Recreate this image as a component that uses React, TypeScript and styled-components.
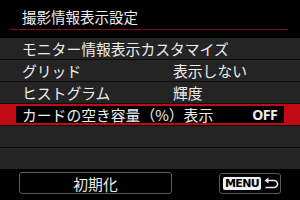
import React from "react";
import styled, { createGlobalStyle } from "styled-components";

const Global = createGlobalStyle`
  html, body { margin: 0; padding: 0; background: #000; }
  body { width: 300px; height: 200px; overflow: hidden; font-family: "Noto Sans CJK JP", "Noto Sans", sans-serif; color: #ececec; }
`;

const Screen = styled.div`
  width: 300px;
  height: 200px;
  background: #000;
  display: flex;
  flex-direction: column;
`;

const Header = styled.div`
  height: 30px;
  padding: 0 12px 0 10px;
  display: flex;
  flex-direction: column;
  justify-content: flex-end;
`;

const Title = styled.div`
  font-size: 14.5px;
  line-height: 16px;
  padding: 0 0 4px 12px;
  color: #ededed;
`;

const RedRule = styled.div`
  height: 1px;
  background: #8a0a10;
`;

const List = styled.div`
  margin-top: 8px;
  display: flex;
  flex-direction: column;
  gap: 1px;
  background: #0c0c0c;
`;

const Row = styled.div<{ $selected?: boolean }>`
  height: 21px;
  box-sizing: border-box;
  background: ${(p) => (p.$selected ? "#c20a14" : "#242424")};
  padding: ${(p) => (p.$selected ? "2px 16px" : "0")};
  display: flex;
`;

const RowInner = styled.div<{ $selected?: boolean }>`
  flex: 1;
  display: grid;
  grid-template-columns: 151px 1fr;
  align-items: center;
  padding-left: ${(p) => (p.$selected ? "6px" : "22px")};
  background: ${(p) => (p.$selected ? "#000" : "transparent")};
  font-size: 14.8px;
  line-height: 16px;
  white-space: nowrap;
  color: #ededed;
`;

const Value = styled.span`
  justify-self: start;
`;

const Off = styled.span`
  justify-self: end;
  padding-right: 7px;
  font-family: "Noto Sans", sans-serif;
  font-weight: 700;
  font-size: 14px;
  letter-spacing: -0.6px;
`;

const Footer = styled.div`
  margin-top: 3px;
  padding: 0 19px;
  display: flex;
  justify-content: space-between;
  align-items: center;
  height: 22px;
`;

const ResetButton = styled.div`
  width: 151px;
  height: 20px;
  border: 1px solid #5a5a5a;
  border-radius: 3px;
  display: flex;
  align-items: center;
  justify-content: center;
  font-size: 14.8px;
  color: #ededed;
`;

const MenuButton = styled.div`
  width: 57px;
  height: 19px;
  border: 1px solid #5a5a5a;
  border-radius: 3px;
  display: flex;
  align-items: center;
  gap: 3px;
  padding-left: 3px;
`;

const MenuLabel = styled.span`
  background: #f2f2f2;
  color: #000;
  border-radius: 2px;
  font-family: "DejaVu Sans", sans-serif;
  font-weight: 700;
  font-size: 11px;
  line-height: 13px;
  width: 38px;
  text-align: center;
  letter-spacing: -0.6px;
`;

const BackIcon = () => (
  <svg width="15" height="13" viewBox="0 0 15 13" fill="none">
    <path d="M4 3.5 H10 A3.5 3.5 0 0 1 10 10.5 H1.5" stroke="#f0f0f0" strokeWidth="1.6" />
    <path d="M0.5 3.5 L4.5 0.5 V6.5 Z" fill="#f0f0f0" />
  </svg>
);

export default function App() {
  return (
    <>
      <Global />
      <Screen>
        <Header>
          <Title>撮影情報表示設定</Title>
          <RedRule />
        </Header>
        <List>
          <Row>
            <RowInner>
              <span>モニター情報表示カスタマイズ</span>
            </RowInner>
          </Row>
          <Row>
            <RowInner>
              <span>グリッド</span>
              <Value>表示しない</Value>
            </RowInner>
          </Row>
          <Row>
            <RowInner>
              <span>ヒストグラム</span>
              <Value>輝度</Value>
            </RowInner>
          </Row>
          <Row $selected>
            <RowInner $selected>
              <span>カードの空き容量（%）表示</span>
              <Off>OFF</Off>
            </RowInner>
          </Row>
          <Row>
            <RowInner />
          </Row>
          <Row>
            <RowInner />
          </Row>
        </List>
        <Footer>
          <ResetButton>初期化</ResetButton>
          <MenuButton>
            <MenuLabel>MENU</MenuLabel>
            <BackIcon />
          </MenuButton>
        </Footer>
      </Screen>
    </>
  );
}
